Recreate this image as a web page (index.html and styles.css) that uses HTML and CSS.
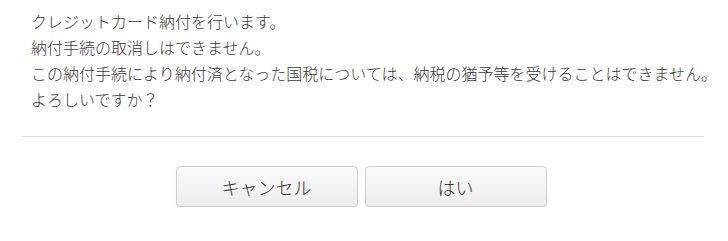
FILE: index.html
```html
<!DOCTYPE html>
<html lang="ja">
<head>
<meta charset="utf-8">
<link rel="stylesheet" href="styles.css">
</head>
<body>
<div class="dialog">
  <div class="message">
    <p>クレジットカード納付を行います。</p>
    <p>納付手続の取消しはできません。</p>
    <p>この納付手続により納付済となった国税については、納税の猶予等を受けることはできません。</p>
    <p>よろしいですか？</p>
  </div>
  <hr class="divider">
  <div class="actions">
    <button class="btn" type="button">キャンセル</button>
    <button class="btn" type="button">はい</button>
  </div>
</div>
</body>
</html>
```

FILE: styles.css
```css
html, body {
  margin: 0;
  padding: 0;
  background: #fff;
}
body {
  font-family: "Noto Sans CJK JP", "Noto Sans", sans-serif;
  color: #3a3a3a;
}
.dialog {
  width: 728px;
}
.message {
  padding: 8px 0 0 31px;
  font-size: 16px;
  line-height: 26px;
  font-weight: 300;
}
.message p {
  margin: 0;
  white-space: nowrap;
}
.divider {
  margin: 24px 24px 0 22px;
  border: 0;
  height: 1px;
  background: #e2e2e2;
}
.actions {
  display: flex;
  justify-content: center;
  gap: 7px;
  margin-top: 29px;
  padding-right: 6px;
}
.btn {
  width: 182px;
  height: 41px;
  border: 1px solid #cfcfcf;
  border-radius: 4px;
  background: linear-gradient(#fbfbfb, #ececec);
  box-shadow: 0 1px 1px rgba(0,0,0,0.12);
  font-family: "Noto Sans CJK JP", "Noto Sans", sans-serif;
  font-size: 18px;
  font-weight: 300;
  color: #333;
  padding: 0;
}
```
